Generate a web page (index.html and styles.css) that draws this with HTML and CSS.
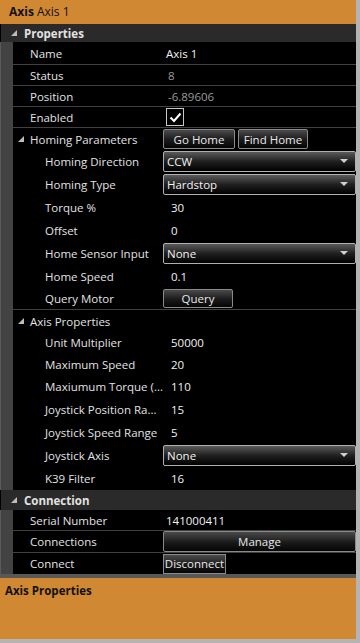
FILE: index.html
```html
<!DOCTYPE html>
<html>
<head>
    <title>Axis Properties</title>
    <link rel="stylesheet" href="styles.css">
</head>
<body>
    <div class="frame">
        <div class="title-bar"><b>Axis</b> Axis 1</div>

        <div class="category">
            <svg class="tri" width="7" height="7" viewBox="0 0 7 7"><polygon points="6,0 6,6 0,6" fill="#bdbdbd"/></svg>
            Properties
        </div>
        <div class="section">
            <div class="gutter"></div>
            <div class="rows">
                <div class="row line h22"><div class="label">Name</div><div class="value">Axis 1</div></div>
                <div class="row line"><div class="label">Status</div><div class="value muted">8</div></div>
                <div class="row line"><div class="label">Position</div><div class="value muted">-6.89606</div></div>
                <div class="row line"><div class="label">Enabled</div><div class="value"><span class="check">
                    <svg width="13" height="11" viewBox="0 0 13 11"><polyline points="1.5,5.5 5,9 11.5,1.5" fill="none" stroke="#fff" stroke-width="2"/></svg>
                </span></div></div>

                <div class="row group h22">
                    <div class="label">
                        <svg class="tri" width="7" height="7" viewBox="0 0 7 7"><polygon points="6,0 6,6 0,6" fill="#bdbdbd"/></svg>
                        Homing Parameters
                    </div>
                    <div class="value ctrl">
                        <button class="btn go">Go Home</button>
                        <button class="btn find">Find Home</button>
                    </div>
                </div>
                <div class="row h23"><div class="label sub">Homing Direction</div><div class="value ctrl"><div class="combo">CCW</div></div></div>
                <div class="row h23"><div class="label sub">Homing Type</div><div class="value ctrl"><div class="combo">Hardstop</div></div></div>
                <div class="row h23"><div class="label sub">Torque %</div><div class="value edit">30</div></div>
                <div class="row h23"><div class="label sub">Offset</div><div class="value edit">0</div></div>
                <div class="row h23"><div class="label sub">Home Sensor Input</div><div class="value ctrl"><div class="combo">None</div></div></div>
                <div class="row h23"><div class="label sub">Home Speed</div><div class="value edit">0.1</div></div>
                <div class="row line h21"><div class="label sub">Query Motor</div><div class="value ctrl"><button class="btn query">Query</button></div></div>

                <div class="row group h22">
                    <div class="label">
                        <svg class="tri" width="7" height="7" viewBox="0 0 7 7"><polygon points="6,0 6,6 0,6" fill="#bdbdbd"/></svg>
                        Axis Properties
                    </div>
                    <div class="value"></div>
                </div>
                <div class="row"><div class="label sub">Unit Multiplier</div><div class="value edit">50000</div></div>
                <div class="row h22"><div class="label sub">Maximum Speed</div><div class="value edit">20</div></div>
                <div class="row h23"><div class="label sub">Maxiumum Torque (...</div><div class="value edit">110</div></div>
                <div class="row h23"><div class="label sub">Joystick Position Ra...</div><div class="value edit">15</div></div>
                <div class="row h23"><div class="label sub">Joystick Speed Range</div><div class="value edit">5</div></div>
                <div class="row h23"><div class="label sub">Joystick Axis</div><div class="value ctrl"><div class="combo">None</div></div></div>
                <div class="row h23"><div class="label sub">K39 Filter</div><div class="value edit">16</div></div>
            </div>
        </div>

        <div class="category cat-conn">
            <svg class="tri" width="7" height="7" viewBox="0 0 7 7"><polygon points="6,0 6,6 0,6" fill="#bdbdbd"/></svg>
            Connection
        </div>
        <div class="section">
            <div class="gutter"></div>
            <div class="rows">
                <div class="row line"><div class="label">Serial Number</div><div class="value">141000411</div></div>
                <div class="row line h21"><div class="label">Connections</div><div class="value ctrl"><button class="btn wide">Manage</button></div></div>
                <div class="row"><div class="label">Connect</div><div class="value ctrl"><button class="btn disc">Disconnect</button></div></div>
            </div>
        </div>

        <div class="description">Axis Properties</div>
    </div>
</body>
</html>
```

FILE: styles.css
```css
* {
    box-sizing: border-box;
}

body {
    margin: 0;
    padding: 0;
    background-color: #b4b4b4;
    font-family: "Open Sans", "Noto Sans", sans-serif;
    font-size: 11.5px;
    color: #e2e2e2;
}

.frame {
    width: 360px;
    height: 643px;
    border-right: 4px solid #b4b4b4;
    border-bottom: 4px solid #b4b4b4;
    background-color: #000;
    display: flex;
    flex-direction: column;
}

.title-bar {
    height: 24px;
    line-height: 24px;
    padding-left: 9px;
    background-color: #d08833;
    color: #111;
    font-size: 12px;
    flex: none;
}

.category {
    height: 18px;
    flex: none;
    margin-left: 1px;
    background-color: #2a2a2a;
    font-weight: bold;
    display: flex;
    align-items: center;
    gap: 6px;
    padding-left: 10px;
}

.cat-conn {
    height: 20px;
}

.tri {
    flex: none;
}

.section {
    display: flex;
    flex: none;
    border-left: 1px solid #5a5a5a;
}

.gutter {
    width: 12px;
    flex: none;
    background-color: #434343;
}

.rows {
    flex: 1;
    display: flex;
    flex-direction: column;
}

.row {
    display: flex;
    align-items: center;
    height: 21px;
    flex: none;
}

.row.line {
    border-bottom: 1px solid #414141;
}

.row.h21 {
    height: 22px;
}

.row.h22 {
    height: 22px;
}

.row.line.h22 {
    height: 23px;
}

.row.h23 {
    height: 23px;
}

.label {
    width: 150px;
    flex: none;
    padding-left: 17px;
    white-space: nowrap;
    overflow: hidden;
    display: flex;
    align-items: center;
    gap: 5px;
}

.row.group .label {
    padding-left: 5px;
}

.label.sub {
    padding-left: 32px;
}

.value {
    flex: 1;
    padding-left: 3px;
    color: #f2f2f2;
    white-space: nowrap;
    display: flex;
    align-items: center;
    gap: 3px;
}

.value.muted {
    color: #9a9a9a;
    padding-left: 5px;
}

.value.edit {
    padding-left: 8px;
}

.value.ctrl {
    padding-left: 0;
}

.check {
    width: 18px;
    height: 18px;
    border: 1px solid #c8c8c8;
    display: flex;
    align-items: center;
    justify-content: center;
}

.btn {
    font-family: inherit;
    font-size: 11.5px;
    color: #e8e8e8;
    height: 20px;
    padding: 0;
    border: 1px solid #8a8a8a;
    border-radius: 2px;
    background: linear-gradient(#4a4a4a, #1a1a1a 55%, #050505);
}

.btn.go {
    width: 72px;
}

.btn.find {
    width: 70px;
}

.btn.query {
    width: 70px;
    height: 19px;
}

.btn.wide {
    flex: 1;
    height: 21px;
}

.btn.disc {
    width: 63px;
    height: 20px;
    border-radius: 0;
}

.combo {
    flex: 1;
    height: 21px;
    line-height: 19px;
    padding-left: 3px;
    border: 1px solid #b0b0b0;
    border-radius: 2px;
    background: linear-gradient(#5a5a5a, #202020 50%, #000);
    position: relative;
    color: #f2f2f2;
}

.combo::after {
    content: "";
    position: absolute;
    right: 7px;
    top: 7px;
    border-left: 4px solid transparent;
    border-right: 4px solid transparent;
    border-top: 4px solid #d0d0d0;
}

.description {
    flex: 1;
    border-top: 4px solid #585858;
    background-color: #d08833;
    color: #111;
    font-weight: bold;
    padding: 5px 5px;
}
```
